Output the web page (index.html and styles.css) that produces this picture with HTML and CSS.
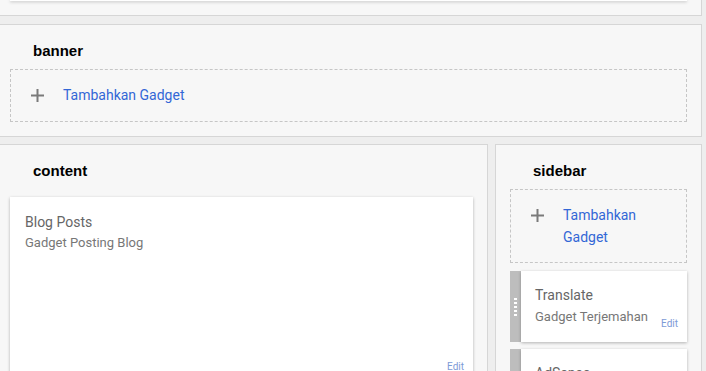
FILE: index.html
```html
<!DOCTYPE html>
<html>
<head>
<meta charset="utf-8">
<link rel="stylesheet" href="styles.css">
</head>
<body>
<div class="page">
  <section class="section section-top">
    <div class="top-card"></div>
  </section>

  <section class="section section-banner">
    <h2 class="section-title">banner</h2>
    <div class="add-box">
      <svg class="plus" width="13" height="13" viewBox="0 0 13 13"><path d="M6.5 0V13M0 6.5H13" stroke="#7a7a7a" stroke-width="2" fill="none"/></svg>
      <a class="add-link">Tambahkan Gadget</a>
    </div>
  </section>

  <div class="columns">
    <section class="section col-content">
      <h2 class="section-title">content</h2>
      <div class="card blog-card">
        <div class="card-title">Blog Posts</div>
        <div class="card-sub">Gadget Posting Blog</div>
        <span class="edit">Edit</span>
      </div>
    </section>

    <section class="section col-sidebar">
      <h2 class="section-title">sidebar</h2>
      <div class="add-box">
        <svg class="plus" width="13" height="13" viewBox="0 0 13 13"><path d="M6.5 0V13M0 6.5H13" stroke="#7a7a7a" stroke-width="2" fill="none"/></svg>
        <a class="add-link">Tambahkan Gadget</a>
      </div>

      <div class="widget">
        <div class="handle"><span class="dots"></span></div>
        <div class="card widget-body">
          <div class="card-title">Translate</div>
          <div class="card-sub">Gadget Terjemahan</div>
          <span class="edit">Edit</span>
        </div>
      </div>

      <div class="widget">
        <div class="handle"><span class="dots"></span></div>
        <div class="card widget-body">
          <div class="card-title">AdSense</div>
          <div class="card-sub">Gadget AdSense</div>
          <span class="edit">Edit</span>
        </div>
      </div>
    </section>
  </div>
</div>
</body>
</html>
```

FILE: styles.css
```css
* { box-sizing: border-box; }

html, body {
  margin: 0;
  padding: 0;
  background: #eeeeee;
  overflow: hidden;
}

body {
  width: 706px;
  height: 371px;
  font-family: Roboto, "Liberation Sans", Arial, sans-serif;
}

.page {
  margin-left: -5px;
  width: 707px;
}

.section {
  background: #f7f7f7;
  border: 1px solid #d6d6d6;
  padding: 0 14px 14px;
}

.section-banner {
  margin-top: 8px;
}

.columns {
  display: flex;
  gap: 7px;
  align-items: flex-start;
  margin-top: 7px;
}

.section-top {
  border-top: none;
  padding-bottom: 14px;
}

.top-card {
  height: 1px;
  background: #fff;
  box-shadow: 0 1px 3px rgba(0,0,0,0.35);
}

.section-title {
  margin: 0 0 8px 23px;
  padding-top: 16px;
  font-family: "Liberation Sans", Arial, sans-serif;
  font-weight: bold;
  font-size: 15px;
  line-height: 20px;
  color: #000;
}

.add-box {
  display: flex;
  align-items: flex-start;
  border: 1px dashed #c6c6c6;
  padding: 14px 20px 15px 20px;
}

.plus {
  flex: none;
  margin-top: 5px;
  margin-right: 19px;
}

.add-link {
  color: #3367d6;
  font-size: 14px;
  line-height: 22px;
  cursor: pointer;
}

.col-content {
  width: 493px;
  flex: none;
  height: 260px;
}

.col-content .section-title {
  margin-bottom: 16px;
}

.col-sidebar {
  width: 207px;
  flex: none;
  height: 260px;
}

.col-sidebar .add-box {
  margin-top: 1px;
  padding-bottom: 14px;
}

.card {
  position: relative;
  background: #fff;
  box-shadow: 0 1px 3px rgba(0,0,0,0.28);
}

.blog-card {
  height: 188px;
  padding: 15px 15px;
}

.card-title {
  font-size: 14px;
  line-height: 20px;
  color: #666;
}

.card-sub {
  margin-top: 1px;
  font-size: 13px;
  line-height: 20px;
  color: #777;
}

.edit {
  position: absolute;
  right: 9px;
  bottom: 12px;
  font-size: 10px;
  line-height: 12px;
  color: #7d9ad6;
}

.widget {
  display: flex;
  margin-top: 8px;
  height: 71px;
}

.widget + .widget {
  margin-top: 7px;
}

.handle {
  flex: none;
  width: 11px;
  background: #bdbdbd;
  display: flex;
  align-items: center;
  padding-left: 4px;
}

.dots {
  display: block;
  width: 3px;
  height: 18px;
  background: repeating-linear-gradient(to bottom, #fff 0 2px, transparent 2px 4px);
}

.widget-body {
  flex: 1;
  padding: 14px 14px;
}

.widget-body .card-sub {
  margin-top: 2px;
}
```
